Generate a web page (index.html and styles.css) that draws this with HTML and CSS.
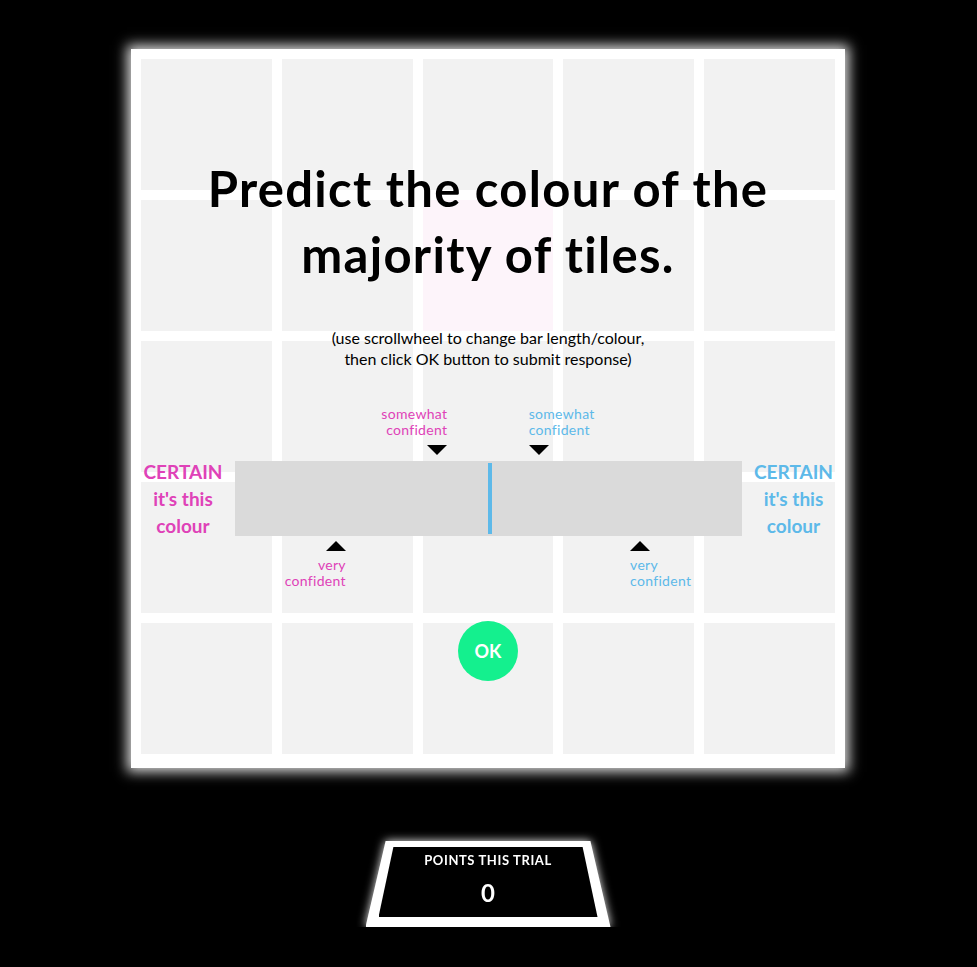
FILE: index.html
```html
<!DOCTYPE html>
<html lang="en">
<head>
    <meta charset="UTF-8">
    <title>Colour Majority Task</title>
    <link rel="stylesheet" href="styles.css">
</head>
<body>
    <div class="stage">

        <!-- Tile board with the response overlay on top -->
        <div class="board">
            <div class="tile"></div><div class="tile"></div><div class="tile"></div><div class="tile"></div><div class="tile"></div>
            <div class="tile"></div><div class="tile"></div><div class="tile tint"></div><div class="tile"></div><div class="tile"></div>
            <div class="tile"></div><div class="tile"></div><div class="tile"></div><div class="tile"></div><div class="tile"></div>
            <div class="tile"></div><div class="tile"></div><div class="tile"></div><div class="tile"></div><div class="tile"></div>
            <div class="tile"></div><div class="tile"></div><div class="tile"></div><div class="tile"></div><div class="tile"></div>

            <div class="overlay">
                <h1 class="title">Predict the colour of the<br>majority of tiles.</h1>
                <p class="hint">(use scrollwheel to change bar length/colour,<br>then click OK button to submit response)</p>

                <div class="scale">
                    <div class="ticks ticks-top">
                        <div class="tick tick-40 pink">
                            <div class="tick-text"><span>somewhat<br>confident</span></div>
                            <div class="arrow down"></div>
                        </div>
                        <div class="tick tick-60 blue">
                            <div class="tick-text"><span>somewhat<br>confident</span></div>
                            <div class="arrow down"></div>
                        </div>
                    </div>

                    <div class="bar-row">
                        <div class="certain pink">CERTAIN<br>it's this<br>colour</div>
                        <div class="bar">
                            <div class="needle"></div>
                        </div>
                        <div class="certain blue">CERTAIN<br>it's this<br>colour</div>
                    </div>

                    <div class="ticks ticks-bottom">
                        <div class="tick tick-20 pink">
                            <div class="arrow up"></div>
                            <div class="tick-text"><span>very<br>confident</span></div>
                        </div>
                        <div class="tick tick-80 blue">
                            <div class="arrow up"></div>
                            <div class="tick-text"><span>very<br>confident</span></div>
                        </div>
                    </div>
                </div>

                <button class="ok">OK</button>
            </div>
        </div>

        <!-- Score panel -->
        <div class="points">
            <div class="points-frame">
                <div class="points-inner">
                    <div class="points-label">POINTS THIS TRIAL</div>
                    <div class="points-value">0</div>
                </div>
            </div>
        </div>

    </div>
</body>
</html>
```

FILE: styles.css
```css
* {
    box-sizing: border-box;
    margin: 0;
    padding: 0;
}

body {
    background: #000;
    font-family: 'Lato', 'Open Sans', sans-serif;
    color: #000;
}

.stage {
    display: flex;
    flex-direction: column;
    align-items: center;
    padding-top: 49px;
    padding-right: 1px;
}

/* board */
.board {
    position: relative;
    width: 714px;
    padding: 10px 10px 14px;
    background: #fff;
    display: grid;
    grid-template-columns: repeat(5, 1fr);
    grid-template-rows: repeat(5, 131px);
    gap: 10px;
    box-shadow: 0 0 12px 4px rgba(255, 255, 255, 0.85);
}

.tile {
    background: #f2f2f2;
}

.tile.tint {
    background: #fdf4fa;
}

.overlay {
    position: absolute;
    inset: 0;
    display: flex;
    flex-direction: column;
    align-items: center;
    padding-top: 106px;
}

.title {
    font-size: 49px;
    font-weight: 700;
    line-height: 66px;
    text-align: center;
    letter-spacing: 1.3px;
    text-shadow: 0 0 2px #fff;
}

.hint {
    margin-top: 40px;
    font-size: 16px;
    line-height: 21px;
    text-align: center;
}

/* confidence scale */
.scale {
    width: 100%;
    margin-top: 37px;
    display: flex;
    flex-direction: column;
}

.ticks {
    width: 507px;
    margin: 0 auto;
    display: grid;
    grid-template-columns: repeat(10, 1fr);
}

.ticks-top {
    height: 52px;
    align-items: end;
    padding-bottom: 5px;
}

.ticks-bottom {
    height: 57px;
    align-items: start;
    padding-top: 2px;
}

.tick {
    display: flex;
    flex-direction: column;
    align-items: center;
    grid-row: 1;
}

.tick-20 { grid-column: 2 / 4; }
.tick-40 { grid-column: 4 / 6; }
.tick-60 { grid-column: 6 / 8; }
.tick-80 { grid-column: 8 / 10; }

.tick-text {
    width: 20px;
    display: flex;
    font-size: 14px;
    line-height: 16px;
    letter-spacing: 0.3px;
    white-space: nowrap;
}

.pink .tick-text {
    justify-content: flex-end;
    text-align: right;
}

.blue .tick-text {
    justify-content: flex-start;
    text-align: left;
}

.ticks-top .tick-text {
    margin-bottom: 7px;
}

.ticks-bottom .tick-text {
    margin-top: 6px;
}

.arrow {
    width: 0;
    height: 0;
    border-left: 10px solid transparent;
    border-right: 10px solid transparent;
}

.arrow.down {
    border-top: 10px solid #000;
}

.arrow.up {
    border-bottom: 10px solid #000;
}

.bar-row {
    display: grid;
    grid-template-columns: 104px 507px 1fr;
    align-items: center;
}

.bar {
    height: 75px;
    background: #dadada;
    display: flex;
    justify-content: center;
    align-items: center;
}

.needle {
    width: 4px;
    height: 71px;
    margin-left: 2px;
    background: #5db9e9;
}

.certain {
    font-size: 19px;
    font-weight: 700;
    line-height: 27px;
    text-align: center;
}

.pink {
    color: #df42b8;
}

.blue {
    color: #5db9e9;
}

.ok {
    margin-top: 25px;
    width: 60px;
    height: 60px;
    border: none;
    border-radius: 50%;
    background: #14f08e;
    color: #fff;
    font-family: inherit;
    font-size: 18px;
    font-weight: 700;
    cursor: pointer;
}

/* score panel */
.points {
    margin-top: 73px;
    filter: drop-shadow(0 0 5px rgba(255, 255, 255, 0.95));
}

.points-frame {
    width: 245px;
    height: 86px;
    padding: 6px 13px 10px;
    background: #fff;
    clip-path: polygon(8.2% 0, 91.8% 0, 100% 100%, 0 100%);
}

.points-inner {
    height: 100%;
    background: #000;
    clip-path: polygon(6.8% 0, 93.2% 0, 100% 100%, 0 100%);
    color: #fff;
    text-align: center;
    padding-top: 5px;
}

.points-label {
    font-size: 13px;
    font-weight: 700;
    letter-spacing: 0.6px;
}

.points-value {
    margin-top: 10px;
    font-size: 24px;
    font-weight: 700;
}
```
